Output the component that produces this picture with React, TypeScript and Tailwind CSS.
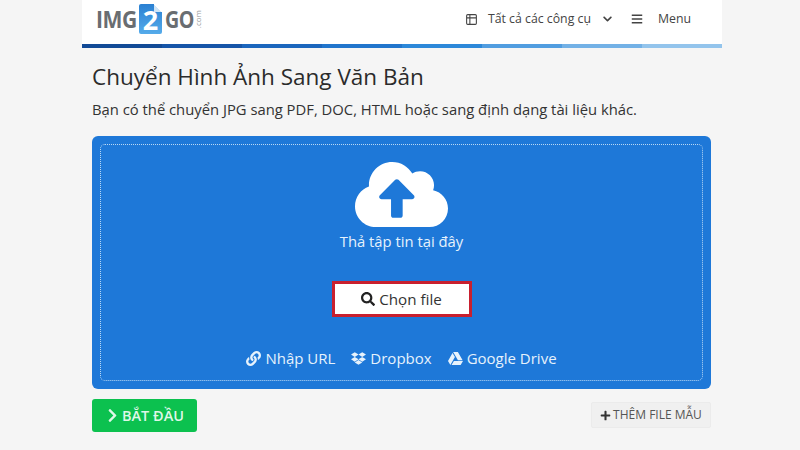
import { FaBars, FaChevronDown, FaChevronRight, FaCloudUploadAlt, FaDropbox, FaGoogleDrive, FaLink, FaPlus, FaSearch } from 'react-icons/fa'
import { LuTable2 } from 'react-icons/lu'

const barColors = ['bg-[#124a96]', 'bg-[#1655a8]', 'bg-[#1b66bd]', 'bg-[#2175cc]', 'bg-[#2c88d9]', 'bg-[#519de0]', 'bg-[#73b1e6]', 'bg-[#93c4ec]']

function Logo() {
  return (
    <div className="flex items-center font-['Open_Sans',sans-serif] text-[24px] leading-none font-bold text-[#696d71]">
      <span className="inline-block w-[40px] origin-left scale-x-[.88] whitespace-nowrap tracking-[-.5px]">IMG</span>
      <div className="relative mx-[3px] flex h-[30px] w-[23px] items-center justify-center rounded-[2px] bg-gradient-to-b from-[#2a80d2] to-[#55abea] text-[27px] text-white">
        2
        <div className="absolute top-0 right-0 h-[8px] w-[8px] bg-[linear-gradient(45deg,#cfe5f7_50%,#ffffff_50%)]" />
      </div>
      <span className="inline-block w-[29px] origin-left scale-x-[.82] whitespace-nowrap tracking-[-.5px]">GO</span>
      <span className="[writing-mode:vertical-rl] rotate-180 text-[8px] leading-[7px] font-normal text-[#9a9da0]">.com</span>
    </div>
  )
}

function Header() {
  return (
    <header className="flex h-[44px] items-center justify-between bg-white pr-[31px] pb-[6px] pl-[14px] text-[#444]">
      <Logo />
      <nav className="flex items-center text-[12.3px]">
        <LuTable2 className="h-[13px] w-[13px] text-[#444]" />
        <span className="ml-[10px]">Tất cả các công cụ</span>
        <FaChevronDown className="ml-[11px] h-[10px] w-[11px]" />
        <FaBars className="ml-[18px] h-[12px] w-[12px]" />
        <span className="ml-[15px]">Menu</span>
      </nav>
    </header>
  )
}

function SourceLink({ icon, label }: { icon: React.ReactNode; label: string }) {
  return (
    <span className="flex items-center gap-[4px]">
      {icon}
      {label}
    </span>
  )
}

function DropZone() {
  return (
    <div className="mt-[17px] h-[253px] rounded-[6px] bg-[#1e78d8] p-[8px] text-[#e6f2fc]">
      <div className="flex h-[237px] flex-col items-center rounded-[5px] border border-dotted border-[#b9d8f4]">
        <FaCloudUploadAlt className="mt-[3px] h-[93px] w-[93px] text-white" />
        <div className="mt-[-10px] text-[14.8px] leading-[20px]">Thả tập tin tại đây</div>
        <button className="mt-[30px] flex h-[36px] w-[140px] items-center justify-center gap-[4px] border-[3px] border-[#c8202f] bg-white text-[15.2px] text-[#333]">
          <FaSearch className="h-[14px] w-[14px] text-[#222]" />
          Chọn file
        </button>
        <div className="mt-[31px] flex items-center gap-[16px] text-[15px] leading-[20px]">
          <SourceLink icon={<FaLink className="h-[15px] w-[15px]" />} label="Nhập URL" />
          <SourceLink icon={<FaDropbox className="h-[15px] w-[15px]" />} label="Dropbox" />
          <SourceLink icon={<FaGoogleDrive className="h-[15px] w-[15px]" />} label="Google Drive" />
        </div>
      </div>
    </div>
  )
}

export default function App() {
  return (
    <div className="h-[450px] w-[800px] overflow-hidden bg-[#f5f5f5] font-['Open_Sans',sans-serif]">
      <div className="ml-[82px] w-[640px]">
        <Header />
        <div className="flex h-[4px]">
          {barColors.map((c) => (
            <div key={c} className={`h-full flex-1 ${c}`} />
          ))}
        </div>
        <main className="pr-[11px] pl-[10px]">
          <h1 className="mt-[12px] text-[22.5px] leading-[33px] font-medium text-[#2b2b2b]">Chuyển Hình Ảnh Sang Văn Bản</h1>
          <p className="mt-[6px] text-[14.8px] leading-[20px] text-[#333]">
            Bạn có thể chuyển JPG sang PDF, DOC, HTML hoặc sang định dạng tài liệu khác.
          </p>
          <DropZone />
          <div className="mt-[10px] flex items-start justify-between">
            <button className="flex h-[33px] w-[105px] items-center justify-center gap-[2px] rounded-[3px] bg-[#0cc14f] text-[14.5px] font-semibold text-[#dff7e8]">
              <FaChevronRight className="h-[15px] w-[15px]" />
              BẮT ĐẦU
            </button>
            <button className="mt-[3px] flex h-[26px] w-[120px] items-center justify-center gap-[2px] rounded-[2px] border border-[#ebebeb] bg-[#f0f0f0] text-[12px] text-[#555]">
              <FaPlus className="h-[11px] w-[11px] text-[#333]" />
              THÊM FILE MẪU
            </button>
          </div>
        </main>
      </div>
    </div>
  )
}
